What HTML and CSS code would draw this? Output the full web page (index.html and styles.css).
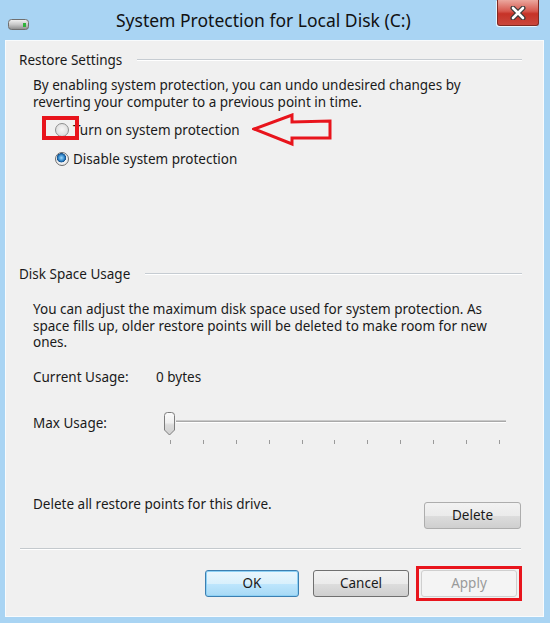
FILE: index.html
```html
<!DOCTYPE html>
<html>
<head>
<meta charset="utf-8">
<link rel="stylesheet" href="styles.css">
</head>
<body>
<div class="window">
  <div class="titlebar">
    <svg class="drive-icon" width="21" height="11" viewBox="0 0 21 11">
      <defs>
        <linearGradient id="dg" x1="0" y1="0" x2="0" y2="1">
          <stop offset="0" stop-color="#f4f4f4"/>
          <stop offset="0.5" stop-color="#c8c8c8"/>
          <stop offset="1" stop-color="#8a8a8a"/>
        </linearGradient>
      </defs>
      <rect x="0.5" y="0.5" width="20" height="10" rx="3" fill="url(#dg)" stroke="#6f6f6f"/>
      <rect x="15" y="4" width="3" height="4" fill="#2fb33a"/>
    </svg>
    <div class="title">System Protection for Local Disk (C:)</div>
    <div class="close">
      <svg width="16" height="14" viewBox="0 0 16 14">
        <path d="M3 2 L13 12 M13 2 L3 12" stroke="#3a3a3a" stroke-width="5" stroke-linecap="round"/>
        <path d="M3 2 L13 12 M13 2 L3 12" stroke="#ffffff" stroke-width="2.6" stroke-linecap="round"/>
      </svg>
    </div>
  </div>
  <div class="client">
    <div class="group-head"><span>Restore Settings</span><i class="rule"></i></div>
    <p class="desc">By enabling system protection, you can undo undesired changes by<br>reverting your computer to a previous point in time.</p>
    <div class="radios">
      <div class="radio-row"><span class="radio"></span><span class="rlabel">Turn on system protection</span></div>
      <div class="radio-row"><span class="radio checked"></span><span class="rlabel">Disable system protection</span></div>
      <span class="hl-box"></span>
      <svg class="arrow" width="82" height="34" viewBox="0 0 82 34">
        <polygon points="2,16 40,2 40,9 78,8 78,25 40,25 40,31" fill="none" stroke="#e8141c" stroke-width="3" stroke-linejoin="miter"/>
      </svg>
    </div>

    <div class="group-head disk"><span>Disk Space Usage</span><i class="rule"></i></div>
    <p class="desc desc2">You can adjust the maximum disk space used for system protection. As<br>space fills up, older restore points will be deleted to make room for new<br>ones.</p>
    <div class="kv"><span class="k">Current Usage:</span><span>0 bytes</span></div>
    <div class="kv slider-row">
      <span class="k">Max Usage:</span>
      <div class="slider">
        <div class="track-area">
          <div class="track"></div>
          <svg class="thumb" width="13" height="24" viewBox="0 0 13 24">
            <defs>
              <linearGradient id="tg" x1="0" y1="0" x2="0" y2="1">
                <stop offset="0" stop-color="#fbfbfb"/>
                <stop offset="0.45" stop-color="#f0f0f0"/>
                <stop offset="0.55" stop-color="#dcdcdc"/>
                <stop offset="1" stop-color="#d0d0d0"/>
              </linearGradient>
            </defs>
            <path d="M1.5 3.5 Q1.5 0.5 4.5 0.5 L8.5 0.5 Q11.5 0.5 11.5 3.5 L11.5 18 L6.5 23 L1.5 18 Z" fill="url(#tg)" stroke="#7d7d7d"/>
          </svg>
        </div>
        <div class="ticks"><i></i><i></i><i></i><i></i><i></i><i></i><i></i><i></i><i></i><i></i><i></i></div>
      </div>
    </div>
    <div class="delete-row"><span>Delete all restore points for this drive.</span><button class="btn del">Delete</button></div>
    <div class="sep"></div>
    <div class="actions">
      <button class="btn default">OK</button>
      <button class="btn cancel">Cancel</button>
      <span class="mark"><button class="btn apply" disabled>Apply</button></span>
    </div>
  </div>
</div>
</body>
</html>
```
FILE: styles.css
```css
html, body {
  margin: 0;
  padding: 0;
}
body {
  width: 550px;
  height: 623px;
  overflow: hidden;
  font-family: "Noto Sans", "Open Sans", sans-serif;
  font-size: 13.5px;
  color: #1a1a1a;
}
.window {
  width: 550px;
  height: 623px;
  background: #a9d4f3;
  display: flex;
  flex-direction: column;
  box-sizing: border-box;
}
.titlebar {
  height: 40px;
  display: flex;
  align-items: flex-start;
  padding-left: 8px;
  box-sizing: border-box;
}
.drive-icon {
  margin-top: 19px;
  flex: none;
}
.title {
  margin-left: 87px;
  font-size: 17.5px;
  line-height: 41px;
  color: #111;
  white-space: nowrap;
}
.close {
  margin-left: auto;
  margin-right: 11px;
  width: 42px;
  height: 26px;
  box-sizing: border-box;
  border: 1px solid #7f2a22;
  border-top: none;
  border-radius: 0 0 3px 3px;
  background: linear-gradient(#eba79e, #d6574d 45%, #c63227 55%, #c9473c);
  box-shadow: -1px 1px 0 #e9f4fc;
  display: flex;
  align-items: center;
  justify-content: center;
}
.client {
  flex: 1;
  margin: 0 6px 6px 5px;
  background: #f0f0f0;
  border: 1px solid #f8fbfd;
  box-sizing: border-box;
  padding: 11px 21px 0 13px;
  position: relative;
}
.group-head {
  display: flex;
  align-items: center;
  height: 16px;
  line-height: 16px;
}
.group-head .rule {
  flex: 1;
  margin-left: 15px;
  height: 0;
  border-top: 1px solid #c6ccd2;
  border-bottom: 1px solid #ffffff;
}
.desc {
  margin: 9px 0 0 14px;
  line-height: 16.5px;
}
.radios {
  margin: 11px 0 0 36px;
  display: flex;
  flex-direction: column;
  gap: 11px;
  position: relative;
}
.radio-row {
  display: flex;
  align-items: center;
  height: 18px;
}
.radio {
  width: 14px;
  height: 14px;
  box-sizing: border-box;
  border-radius: 50%;
  border: 1px solid #8e8f8f;
  background: radial-gradient(circle at 50% 45%, #f6f6f6 0, #e2e2e2 60%, #d0d0d0 100%);
  margin-right: 4px;
  flex: none;
  position: relative;
}
.radio.checked {
  border-color: #6d6d6d;
  background: radial-gradient(circle at 45% 40%, #9fd8fb 0, #3a8fd0 28%, #0f4d8b 45%, #f2f2f2 50%, #dedede 100%);
}
.hl-box {
  position: absolute;
  left: -13px;
  top: -5px;
  width: 37px;
  height: 24px;
  box-sizing: border-box;
  border: 4px solid #e8141c;
}
.arrow {
  position: absolute;
  left: 197px;
  top: -8px;
}
.disk {
  margin-top: 98px;
}
.desc2 {
  margin-top: 19px;
}
.kv {
  display: flex;
  margin: 18px 0 0 14px;
  line-height: 16px;
}
.kv .k {
  width: 123px;
}
.slider-row {
  margin-top: 27px;
  align-items: flex-start;
}
.slider-row .k {
  width: 131px;
  line-height: 22px;
}
.slider {
  width: 342px;
  display: flex;
  flex-direction: column;
}
.track-area {
  height: 24px;
  position: relative;
}
.track {
  margin: 8px 0 0 12px;
  height: 1px;
  background: #a9a9a9;
  border-top: 1px solid #c9c9c9;
  border-bottom: 1px solid #ffffff;
}
.thumb {
  position: absolute;
  left: -1px;
  top: 0;
}
.ticks {
  margin-top: 4px;
  padding: 0 6px;
  display: flex;
  justify-content: space-between;
}
.ticks i {
  width: 1px;
  height: 4px;
  background: #9a9a9a;
}
.delete-row {
  margin: 52px 1px 0 14px;
  display: flex;
  justify-content: space-between;
  align-items: flex-start;
  line-height: 16px;
}
.btn {
  font-family: inherit;
  font-size: 13.5px;
  color: #1a1a1a;
  height: 27px;
  box-sizing: border-box;
  border: 1px solid #adadad;
  border-radius: 3px;
  background: linear-gradient(#f2f2f2, #ebebeb 50%, #dddddd 51%, #cfcfcf);
  padding: 0;
}
.del {
  width: 97px;
  height: 27px;
  margin-top: 6px;
}
.sep {
  margin: 19px 1px 0 1px;
  height: 0;
  border-top: 1px solid #c4c9cd;
  border-bottom: 1px solid #ffffff;
}
.actions {
  margin-top: 16px;
  display: flex;
  justify-content: flex-end;
  align-items: center;
}
.default {
  width: 94px;
  border-color: #3c7fb1;
  background: linear-gradient(#eaf6fd, #d9f0fc 50%, #bee6fd 51%, #a7d9f5);
  box-shadow: inset 0 0 0 1px #8ed1f5;
}
.cancel {
  width: 96px;
  margin-left: 14px;
  border-color: #707070;
}
.mark {
  margin-left: 7px;
  border: 3px solid #e8141c;
  padding: 1px 2px;
  display: flex;
}
.apply {
  width: 96px;
  color: #9a9a9a;
  border-color: #cfcfcf;
  background: #f4f4f4;
}
```
